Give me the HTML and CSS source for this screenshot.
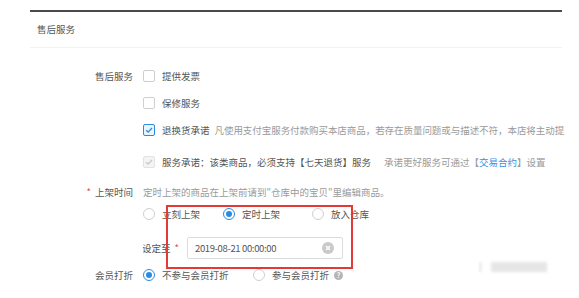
FILE: index.html
```html
<!DOCTYPE html>
<html lang="zh-CN">
<head>
  <meta charset="UTF-8">
  <title>售后服务</title>
  <link rel="stylesheet" href="styles.css">
</head>
<body>
  <div class="panel">
    <div class="panel-title">售后服务</div>
    <div class="form">
      <div class="row r1">
        <div class="label">售后服务</div>
        <div class="field">
          <span class="check"></span><span class="opt">提供发票</span>
        </div>
      </div>
      <div class="row r2">
        <div class="label"></div>
        <div class="field">
          <span class="check"></span><span class="opt">保修服务</span>
        </div>
      </div>
      <div class="row r3">
        <div class="label"></div>
        <div class="field open">
          <span class="check on">
            <svg viewBox="0 0 12 12" width="12" height="12"><path d="M2.6 6.2 L5 8.5 L9.6 3.6" fill="none" stroke="#2b8be0" stroke-width="1.6"/></svg>
          </span><span class="opt">退换货承诺</span>
          <span class="hint long">凡使用支付宝服务付款购买本店商品，若存在质量问题或与描述不符，本店将主动提</span>
        </div>
      </div>
      <div class="row r4">
        <div class="label"></div>
        <div class="field">
          <span class="check off">
            <svg viewBox="0 0 12 12" width="12" height="12"><path d="M2.6 6.2 L5 8.5 L9.6 3.6" fill="none" stroke="#c8c8c8" stroke-width="1.6"/></svg>
          </span><span class="opt">服务承诺：该类商品，必须支持【七天退货】服务</span>
          <span class="hint tip">承诺更好服务可通过【<a class="link">交易合约</a>】设置</span>
        </div>
      </div>
      <div class="row r5">
        <div class="label"><span class="req">*</span>上架时间</div>
        <div class="field">
          <span class="hint first">定时上架的商品在上架前请到"仓库中的宝贝"里编辑商品。</span>
        </div>
      </div>
      <div class="row r6">
        <div class="label"></div>
        <div class="field">
          <span class="radio"></span><span class="opt w-now">立刻上架</span>
          <span class="radio on"></span><span class="opt w-timed">定时上架</span>
          <span class="radio"></span><span class="opt">放入仓库</span>
        </div>
      </div>
      <div class="row r7">
        <div class="label"></div>
        <div class="field">
          <span class="sub-label">设定至</span><span class="req sub">*</span>
          <div class="date-input">
            <span class="date-text">2019-08-21 00:00:00</span>
            <span class="clear">
              <svg viewBox="0 0 12 12" width="12" height="12"><circle cx="6" cy="6" r="6" fill="#c9c9c9"/><path d="M4 4 L8 8 M8 4 L4 8" stroke="#fff" stroke-width="1.4"/></svg>
            </span>
          </div>
        </div>
      </div>
      <div class="row r8">
        <div class="label">会员打折</div>
        <div class="field">
          <span class="radio on"></span><span class="opt w-no">不参与会员打折</span>
          <span class="radio"></span><span class="opt">参与会员打折</span>
          <span class="help">?</span>
        </div>
      </div>
    </div>
    <div class="mark"></div>
    <div class="watermark"><span class="wm-icon"></span><span class="wm-bar"></span></div>
  </div>
</body>
</html>
```
FILE: styles.css
```css
* {
  margin: 0;
  padding: 0;
  box-sizing: border-box;
}

body {
  background-color: #fff;
  font-family: "Noto Sans CJK SC", "Microsoft YaHei", sans-serif;
  font-size: 9.5px;
  color: #555;
  overflow: hidden;
}

.panel {
  position: relative;
  margin: 10px 0 0 30px;
  width: 532px;
  height: 288px;
  border-top: 2px solid #4a4a4a;
}

.panel-title {
  height: 36px;
  padding-left: 7px;
  line-height: 34px;
  border-bottom: 1px solid #f2f2f2;
  color: #555;
}

.form {
  padding-top: 14px;
}

.row {
  display: flex;
  align-items: center;
}

.r1, .r2, .r3 { height: 27px; }
.r4 { height: 26px; margin-top: 6px; }
.r5 { height: 22px; margin-top: 6px; }
.r6 { height: 22px; }
.r7 { height: 26px; margin-top: 10px; }
.r8 { height: 28px; }

.label {
  width: 103px;
  flex-shrink: 0;
  text-align: right;
  color: #555;
}

.req {
  color: #e5484d;
  margin-right: 4px;
}

.field {
  display: flex;
  align-items: center;
  margin-left: 10px;
  white-space: nowrap;
  overflow: hidden;
  flex: 1;
}

.field.open { overflow: visible; }

.check {
  width: 12px;
  height: 12px;
  border: 1px solid #cfcfcf;
  border-radius: 2px;
  background: #fff;
  flex-shrink: 0;
  display: flex;
  align-items: center;
  justify-content: center;
}

.check svg { display: block; }

.check.on {
  border-color: #2b8be0;
  background: #eaf4fd;
}

.check.off {
  border-color: #e2e2e2;
  background: #f4f4f4;
}

.opt {
  margin-left: 7px;
  color: #555;
}

.hint {
  margin-left: 5px;
  color: #9a9a9a;
}

.hint.long { letter-spacing: -0.05px; }
.hint.first { margin-left: 0; }
.hint.tip { margin-left: 13px; }

.link { color: #3a8ee6; }

.radio {
  width: 12px;
  height: 12px;
  border: 1px solid #cfcfcf;
  border-radius: 50%;
  background: #fff;
  flex-shrink: 0;
  display: flex;
  align-items: center;
  justify-content: center;
}

.radio.on { border-color: #2b8be0; }

.radio.on::after {
  content: "";
  width: 6px;
  height: 6px;
  border-radius: 50%;
  background: #2b8be0;
}

.w-now { width: 61px; }
.w-timed { width: 70px; }
.w-no { width: 91px; }

.sub-label { color: #555; margin-left: -1px; }

.req.sub { margin-left: 4px; margin-right: 0; }

.date-input {
  margin-left: 8px;
  width: 156px;
  height: 22px;
  border: 1px solid #dcdcdc;
  border-radius: 2px;
  display: flex;
  align-items: center;
  justify-content: space-between;
  padding: 0 8px 0 7px;
}

.date-text {
  color: #555;
  letter-spacing: -0.35px;
}

.clear svg { display: block; }

.help {
  margin-left: 5px;
  width: 9px;
  height: 9px;
  border-radius: 50%;
  background: #b5b5b5;
  color: #fff;
  font-size: 7px;
  line-height: 9px;
  text-align: center;
  font-weight: bold;
}

/* red annotation frame drawn over the form */
.mark {
  position: absolute;
  left: 136px;
  top: 193px;
  width: 187px;
  height: 64px;
  border: 2px solid #e53935;
}

.watermark {
  position: absolute;
  left: 450px;
  top: 250px;
  display: flex;
  align-items: center;
  gap: 3px;
  filter: blur(1.5px);
}

.wm-icon {
  width: 8px;
  height: 10px;
  border-left: 1px solid #ccc;
}

.wm-bar {
  width: 56px;
  height: 10px;
  background: #e6e6e6;
}
```
